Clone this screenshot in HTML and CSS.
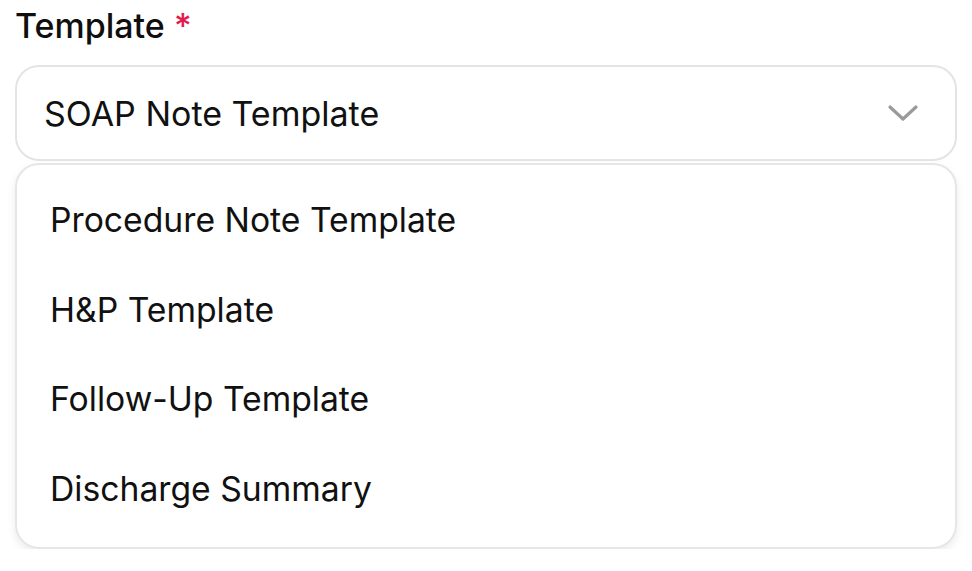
FILE: index.html
```html
<!DOCTYPE html>
<html>
<head>
<meta charset="utf-8">
<link rel="stylesheet" href="styles.css">
</head>
<body>
<div class="field">
  <div class="label">Template <span class="req">*</span></div>
  <div class="select">
    <span class="value">SOAP Note Template</span>
    <svg class="chev" width="32" height="20" viewBox="0 0 32 20"><path d="M3 4 L16 16 L29 4" fill="none" stroke="#9a9a9a" stroke-width="3.2" stroke-linecap="round" stroke-linejoin="round"/></svg>
  </div>
  <div class="menu">
    <div class="item">Procedure Note Template</div>
    <div class="item">H&amp;P Template</div>
    <div class="item">Follow-Up Template</div>
    <div class="item">Discharge Summary</div>
  </div>
</div>
</body>
</html>
```
FILE: styles.css
```css
html, body { margin: 0; padding: 0; background: #fff; }
body { font-family: Inter, "Noto Sans", sans-serif; color: #111; }
.field { padding: 4px 15px 0 15px; width: 942px; }
.label { font-size: 34px; font-weight: 500; line-height: 44px; padding-left: 0; color: #0f0f0f; }
.req { color: #e5194f; }
.select {
  margin-top: 17px;
  height: 92px;
  border: 2px solid #e4e4e4;
  border-radius: 24px;
  display: flex; align-items: center; justify-content: space-between;
  padding: 0 36px 0 27px;
}
.value { font-size: 34px; }
.chev { display: block; }
.menu {
  margin-top: 2px;
  border: 2px solid #e6e6e6;
  border-radius: 24px;
  box-shadow: 0 4px 8px rgba(0,0,0,0.08);
  padding: 10px 0 14px;
}
.item { font-size: 33.7px; height: 89.5px; line-height: 89.5px; padding-left: 33px; }
```
